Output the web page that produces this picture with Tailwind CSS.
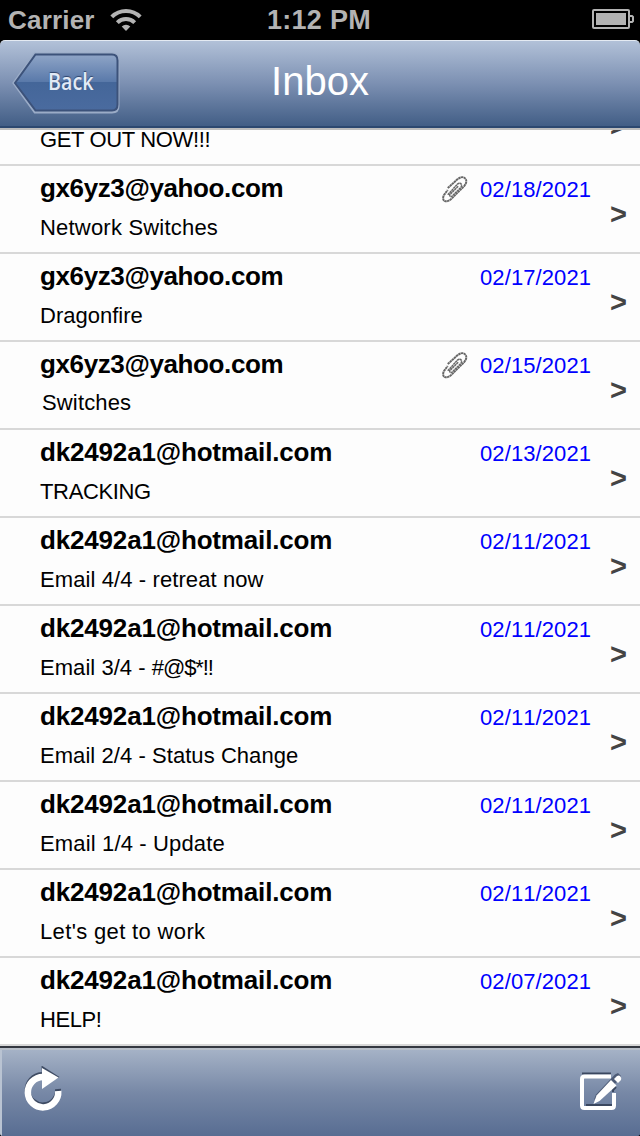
<!DOCTYPE html>
<html lang="en">
<head>
  <meta charset="UTF-8">
  <title>Inbox</title>
  <script src="https://cdn.jsdelivr.net/npm/@tailwindcss/browser@4"></script>
</head>
<body class="bg-black">
  <div class="w-[640px] h-[1136px] flex flex-col overflow-hidden bg-black font-['Liberation_Sans',Arial,sans-serif]">

    <!-- status bar -->
    <div class="h-10 shrink-0 grid grid-cols-3 items-center pl-2 pr-1.5 text-[#b3b3b3] font-bold text-[26px] leading-10">
      <div class="flex items-center gap-4">
        <span class="w-[86px] whitespace-nowrap text-[26px] tracking-[0.2px]">Carrier</span>
        <svg class="w-8 h-6" viewBox="0 0 32 24" fill="none" stroke="#b3b3b3">
          <path d="M1.8 8.8a20 20 0 0 1 28.4 0" stroke-width="4"/>
          <path d="M7.3 14.6a12.4 12.4 0 0 1 17.4 0" stroke-width="4"/>
          <path d="M16 23l-4.3-4.4a6.2 6.2 0 0 1 8.6 0z" fill="#b3b3b3" stroke="none"/>
        </svg>
      </div>
      <span class="text-center text-[27px] tracking-[0.3px] -ml-1">1:12 PM</span>
      <svg class="w-[42px] h-5 justify-self-end -mt-0.5" viewBox="0 0 42 20" fill="none" stroke="#b3b3b3" stroke-width="2">
        <rect x="1" y="1" width="36" height="18" rx="1"/>
        <rect x="4" y="4" width="30" height="12" fill="#b3b3b3" stroke="none"/>
        <path d="M38 7h2l1 1v4l-1 1h-2"/>
      </svg>
    </div>

    <!-- navigation bar -->
    <div class="h-[88px] shrink-0 grid grid-cols-3 items-center rounded-t-[5px] border-t border-[#e4eaf2] border-b-2 border-b-[#2c4870] bg-linear-to-b from-[#b2c1d8] via-[#7c90b2] to-[#425e86] pl-3">
      <div class="relative w-[108px] h-[62px] -mt-0.5">
        <svg class="w-[108px] h-[62px]" viewBox="0 0 108 62">
          <defs>
            <linearGradient id="back" x1="0" y1="0" x2="0" y2="1">
              <stop offset="0" stop-color="#8fa5c7"/>
              <stop offset="0.5" stop-color="#5878a9"/>
              <stop offset="0.5" stop-color="#446699"/>
              <stop offset="1" stop-color="#4a6b9f"/>
            </linearGradient>
          </defs>
          <path d="M23 2H100q6 0 6 6V54q0 6-6 6H23L2 31z" fill="none" stroke="#9bacc7" stroke-width="3"/>
          <path d="M23.500 2.500H100q5.500 0 5.500 6V52.500q0 6-5.500 6H23.500L3 31z" fill="url(#back)" stroke="#3c527a" stroke-width="2"/>
        </svg>
        <span class="absolute left-9 top-[13px] text-[24px] leading-8 font-semibold font-['Open_Sans',sans-serif] text-[#e2eaf6] origin-left scale-x-[0.82] [text-shadow:0_-1px_1px_#30466c]">Back</span>
      </div>
      <h1 class="text-center text-[40px] leading-[46px] text-white -ml-3 -mt-1.5 font-normal">Inbox</h1>
    </div>

    <!-- messages, scrolled so that the first row is partly hidden -->
    <div class="h-[918px] shrink-0 flex flex-col justify-end overflow-hidden border-t-2 border-[#bdbdbd] bg-[#fdfdfd]">
      <div id="list" class="flex flex-col"></div>
    </div>

    <!-- toolbar -->
    <div class="h-[90px] shrink-0 flex flex-col rounded-b-[3px] overflow-hidden bg-[#566b90]">
      <div class="h-0.5 bg-[#333740]"></div>
      <div class="h-0.5 bg-[#b8bfc9]"></div>
      <div class="grow flex items-center justify-between border-l-2 border-[#b9c3d2] bg-linear-to-b from-[#a5b2c6] via-[#7788a6] to-[#586d92] pl-[22px] pr-[18px]">
        <svg class="w-10 h-[46px] -mt-2" viewBox="0 0 40 46" fill="none">
          <path d="M18 9A15.200 15.200 0 1 0 34 23" stroke="#3e4b63" stroke-width="6"/>
          <path d="M17.500-.5l18 11.500-17 8z" fill="#3e4b63"/>
          <path d="M19 11A15.200 15.200 0 1 0 34.200 25" stroke="#fff" stroke-width="6.500"/>
          <path d="M18 2l16.500 9.500L18 23z" fill="#fff"/>
        </svg>
        <svg class="w-[42px] h-10 -mt-1" viewBox="0 0 42 40" fill="none">
          <path d="M2 2.500H31M6 34H33M33 21v-2l3-3" stroke="#3a475f" stroke-width="2"/>
          <path d="M31 5.500H4.500q-2.500 0-2.500 2.500V34.500q0 2.500 2.500 2.500H31.500q2.500 0 2.500-2.500V22" stroke="#fff" stroke-width="4"/>
          <path d="M14 28.500l2-5L35 3.500l3-1.500 3 3-3 5-19 17z" fill="#4d5b76"/>
          <path d="M13.500 33l3-8.500L31 9l5.500 5.500-17 15.500z" fill="#fff"/>
          <path d="M34 8l3-3q2-1 3 0 2 2 1 4l-3 3z" fill="#fff"/>
        </svg>
      </div>
    </div>
  </div>

  <script>
    const yahoo = { from: 'gx6yz3@yahoo.com', fit: 'tracking-[-0.38px]' };
    const hotmail = { from: 'dk2492a1@hotmail.com', fit: 'tracking-[-0.17px]' };

    const messages = [
      { ...yahoo, subject: 'GET OUT NOW!!!', subjectFit: 'tracking-[-0.35px]', date: '02/18/2021' },
      { ...yahoo, subject: 'Network Switches', subjectFit: 'tracking-[0.2px]', date: '02/18/2021', clip: true },
      { ...yahoo, subject: 'Dragonfire', subjectFit: 'tracking-normal', date: '02/17/2021' },
      { ...yahoo, subject: 'Switches', subjectFit: 'tracking-[0.15px] pl-0.5 -mt-px', date: '02/15/2021', clip: true },
      { ...hotmail, subject: 'TRACKING', subjectFit: 'tracking-[-0.35px]', date: '02/13/2021' },
      { ...hotmail, subject: 'Email 4/4 - retreat now', subjectFit: 'tracking-[0.1px]', date: '02/11/2021' },
      { ...hotmail, subject: 'Email 3/4 - <span class="tracking-[-1.1px]">#@$*!!</span>', subjectFit: 'tracking-[0.05px]', date: '02/11/2021' },
      { ...hotmail, subject: 'Email 2/4 - Status Change', subjectFit: 'tracking-[0.06px]', date: '02/11/2021' },
      { ...hotmail, subject: 'Email 1/4 - Update', subjectFit: 'tracking-[0.15px]', date: '02/11/2021' },
      { ...hotmail, subject: "Let's get to work", subjectFit: 'tracking-[0.35px]', date: '02/11/2021' },
      { ...hotmail, subject: 'HELP!', subjectFit: 'tracking-[-0.4px]', date: '02/07/2021' }
    ];

    const clip = `
      <svg class="w-[27px] h-7" viewBox="0 0 28 28" fill="none" stroke="#666" stroke-width="2" stroke-dasharray="2.500 .4">
        <path d="M7 13L17 4q5-4 8-1 3 3-1 8L11 24q-4 4-8 2-2-3 1-7l3-4"/>
        <path d="M7 20L17 9q3-2 4 0 1 2-1 4l-8 8q-3 2-3-1l9-9" stroke-width="1.500"/>
      </svg>`;

    document.getElementById('list').innerHTML = messages.map((m) => `
      <div class="h-[88px] shrink-0 flex border-b-2 border-[#d8d8d8] pl-10 pr-3">
        <div class="grow flex flex-col gap-3 pt-[7px] whitespace-nowrap text-black">
          <div class="text-[26px] leading-[30px] font-bold ${m.fit}">${m.from}</div>
          <div class="text-[22px] leading-[26px] ${m.subjectFit}">${m.subject}</div>
        </div>
        <div class="flex gap-3 pt-[9px] h-10">
          ${m.clip ? clip : ''}
          <div class="w-[112px] pt-px text-[22px] leading-[28px] tracking-[0.1px] [font-kerning:none] text-[#0000ff]">${m.date}</div>
        </div>
        <div class="w-[18px] ml-[18px] pt-8 text-[29px] leading-8 font-bold text-[#444]">&gt;</div>
      </div>`).join('');
  </script>
</body>
</html>
